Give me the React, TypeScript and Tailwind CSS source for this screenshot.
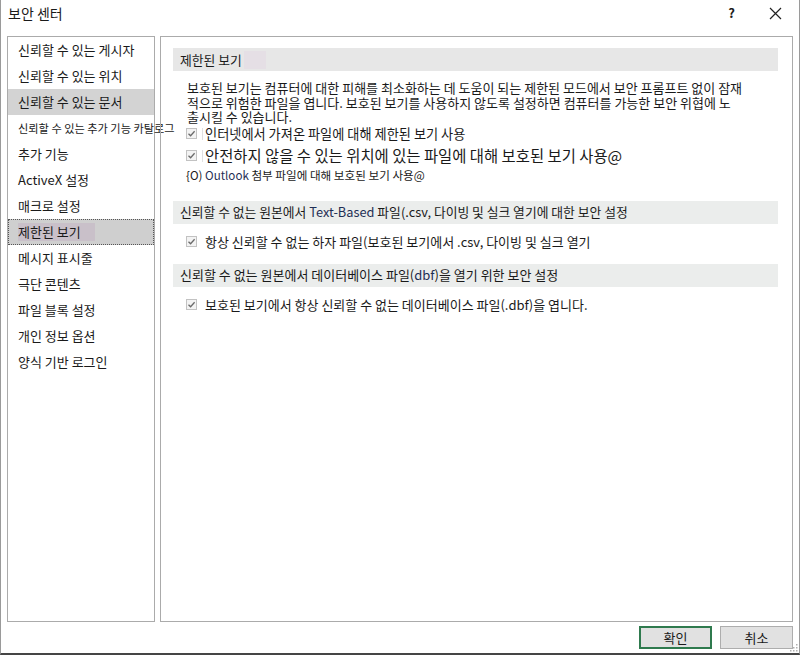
import React from "react";

const font = { fontFamily: '"Noto Sans CJK KR", "Noto Sans", sans-serif' };

function Check() {
  return (
    <span className="inline-flex w-[11px] h-[11px] shrink-0 items-center justify-center border border-[#c2c2c2] bg-[#f3f3f3]">
      <svg width="9" height="9" viewBox="0 0 9 9">
        <path d="M1.5 4.8 L3.6 6.8 L7.6 2.3" fill="none" stroke="#6a6a6a" strokeWidth="1.3" />
      </svg>
    </span>
  );
}

const navItems = [
  "신뢰할 수 있는 게시자",
  "신뢰할 수 있는 위치",
  "신뢰할 수 있는 문서",
  "신뢰할 수 있는 추가 기능 카탈로그",
  "추가 기능",
  "ActiveX 설정",
  "매크로 설정",
  "제한된 보기",
  "메시지 표시줄",
  "극단 콘텐츠",
  "파일 블록 설정",
  "개인 정보 옵션",
  "양식 기반 로그인",
];

export default function App() {
  return (
    <div
      className="w-[800px] h-[655px] bg-white border-l border-r border-[#9a9a9a] border-b-2 border-b-[#454545] flex flex-col text-[#1a1a1a] overflow-hidden"
      style={font}
    >
      {/* title bar */}
      <div className="h-[36px] shrink-0 flex items-start justify-between pt-[3px] pl-[7px] pr-[16px]">
        <span className="text-[14px] leading-[20px]">보안 센터</span>
        <div className="flex items-center gap-[34px] h-[20px] pr-[1px]">
          <span className="text-[13px] font-bold">?</span>
          <svg width="13" height="13" viewBox="0 0 13 13">
            <path d="M1 1 L12 12 M12 1 L1 12" stroke="#222" strokeWidth="1.2" />
          </svg>
        </div>
      </div>

      {/* panels */}
      <div className="flex h-[586px] shrink-0 gap-[5px] px-[6px]">
        {/* left nav */}
        <div className="w-[148px] shrink-0 border border-[#ababab]">
          {navItems.map((t, i) => {
            const selA = i === 2;
            const selB = i === 7;
            const small = i === 3;
            return (
              <div
                key={t}
                className={
                  "h-[26px] flex items-center whitespace-nowrap " +
                  (selA ? "bg-[#d3d3d3] pl-[10px] " : "") +
                  (selB ? "bg-[#cfcfcf] border border-dotted border-[#555] pl-[9px] " : "") +
                  (!selA && !selB ? "pl-[10px] " : "") +
                  (small ? "text-[11.2px]" : "text-[13px]")
                }
              >
                {selB ? (
                  <span className="bg-[#c9c0c9] pr-[14px] leading-[18px]">{t}</span>
                ) : (
                  <span>{t}</span>
                )}
              </div>
            );
          })}
        </div>

        {/* right content */}
        <div className="flex-1 border border-[#ababab] pt-[11px] pl-[12px] pr-[14px]">
          <div className="h-[23px] bg-[#e7e7e7] flex items-center pl-[7px] text-[12.8px]">
            <span>제한된 보기</span>
            <span className="ml-[2px] w-[22px] h-[18px] bg-[#e5dfe5]" />
          </div>

          <p className="mt-[10px] pl-[14px] text-[13px] leading-[14.5px] whitespace-nowrap">
            보호된 보기는 컴퓨터에 대한 피해를 최소화하는 데 도움이 되는 제한된 모드에서 보안 프롬프트 없이 잠재
            <br />
            적으로 위험한 파일을 엽니다. 보호된 보기를 사용하지 않도록 설정하면 컴퓨터를 가능한 보안 위협에 노
            <br />
            출시킬 수 있습니다.
          </p>

          <div className="h-[18px] flex items-center pl-[13px] text-[13.2px]">
            <Check />
            <span className="ml-[5px] w-px h-[12px] bg-[#e0e0e0]" />
            <span className="ml-[2px]">인터넷에서 가져온 파일에 대해 제한된 보기 사용</span>
          </div>
          <div className="h-[22px] mt-[2px] flex items-center pl-[13px] text-[15.4px]">
            <Check />
            <span className="ml-[5px] w-px h-[12px] bg-[#e0e0e0]" />
            <span className="ml-[2px]">안전하지 않을 수 있는 위치에 있는 파일에 대해 보호된 보기 사용@</span>
          </div>
          <div className="h-[16px] mt-[1px] flex items-center pl-[13px] text-[11.6px] whitespace-nowrap">
            <span>
              {"{O) "}
              <span className="text-[#1f2f55]">Outlook</span> 첨부 파일에 대해 보호된 보기 사용@
            </span>
          </div>

          <div className="mt-[17px] h-[23px] bg-[#ebedec] flex items-center pl-[7px] text-[12.8px] whitespace-nowrap">
            <span>
              신뢰할 수 없는 원본에서 <span className="text-[#1f2f55]">Text-Based</span> 파일(.csv, 다이빙 및 실크 열기에 대한 보안 설정
            </span>
          </div>
          <div className="h-[18px] mt-[9px] flex items-center pl-[13px] text-[13px]">
            <Check />
            <span className="ml-[8px]">항상 신뢰할 수 없는 하자 파일(보호된 보기에서 .csv, 다이빙 및 실크 열기</span>
          </div>

          <div className="mt-[13px] h-[23px] bg-[#ebedec] flex items-center pl-[7px] text-[13px] whitespace-nowrap">
            <span>
              신뢰할 수 없는 원본에서 데이터베이스 파일(<span className="text-[#1f2f55]">dbf</span>)을 열기 위한 보안 설정
            </span>
          </div>
          <div className="h-[18px] mt-[9px] flex items-center pl-[13px] text-[13px]">
            <Check />
            <span className="ml-[8px]">보호된 보기에서 항상 신뢰할 수 없는 데이터베이스 파일(.dbf)을 엽니다.</span>
          </div>
        </div>
      </div>

      {/* footer */}
      <div className="flex-1 flex justify-end items-start pt-[4px] pr-[6px] gap-[8px] relative">
        <button className="w-[73px] h-[23px] border-2 border-[#2f7a4e] bg-[#e1e1e1] text-[13px] flex items-center justify-center">
          확인
        </button>
        <button className="w-[73px] h-[23px] border border-[#adadad] bg-[#e1e1e1] text-[13px] flex items-center justify-center">
          취소
        </button>
        <svg className="absolute right-[1px] bottom-[1px]" width="8" height="8" viewBox="0 0 8 8">
          <rect x="6" y="0" width="1.5" height="1.5" fill="#b0b0b0" />
          <rect x="3" y="3" width="1.5" height="1.5" fill="#b0b0b0" />
          <rect x="6" y="3" width="1.5" height="1.5" fill="#b0b0b0" />
          <rect x="0" y="6" width="1.5" height="1.5" fill="#b0b0b0" />
          <rect x="3" y="6" width="1.5" height="1.5" fill="#b0b0b0" />
          <rect x="6" y="6" width="1.5" height="1.5" fill="#b0b0b0" />
        </svg>
      </div>
    </div>
  );
}
